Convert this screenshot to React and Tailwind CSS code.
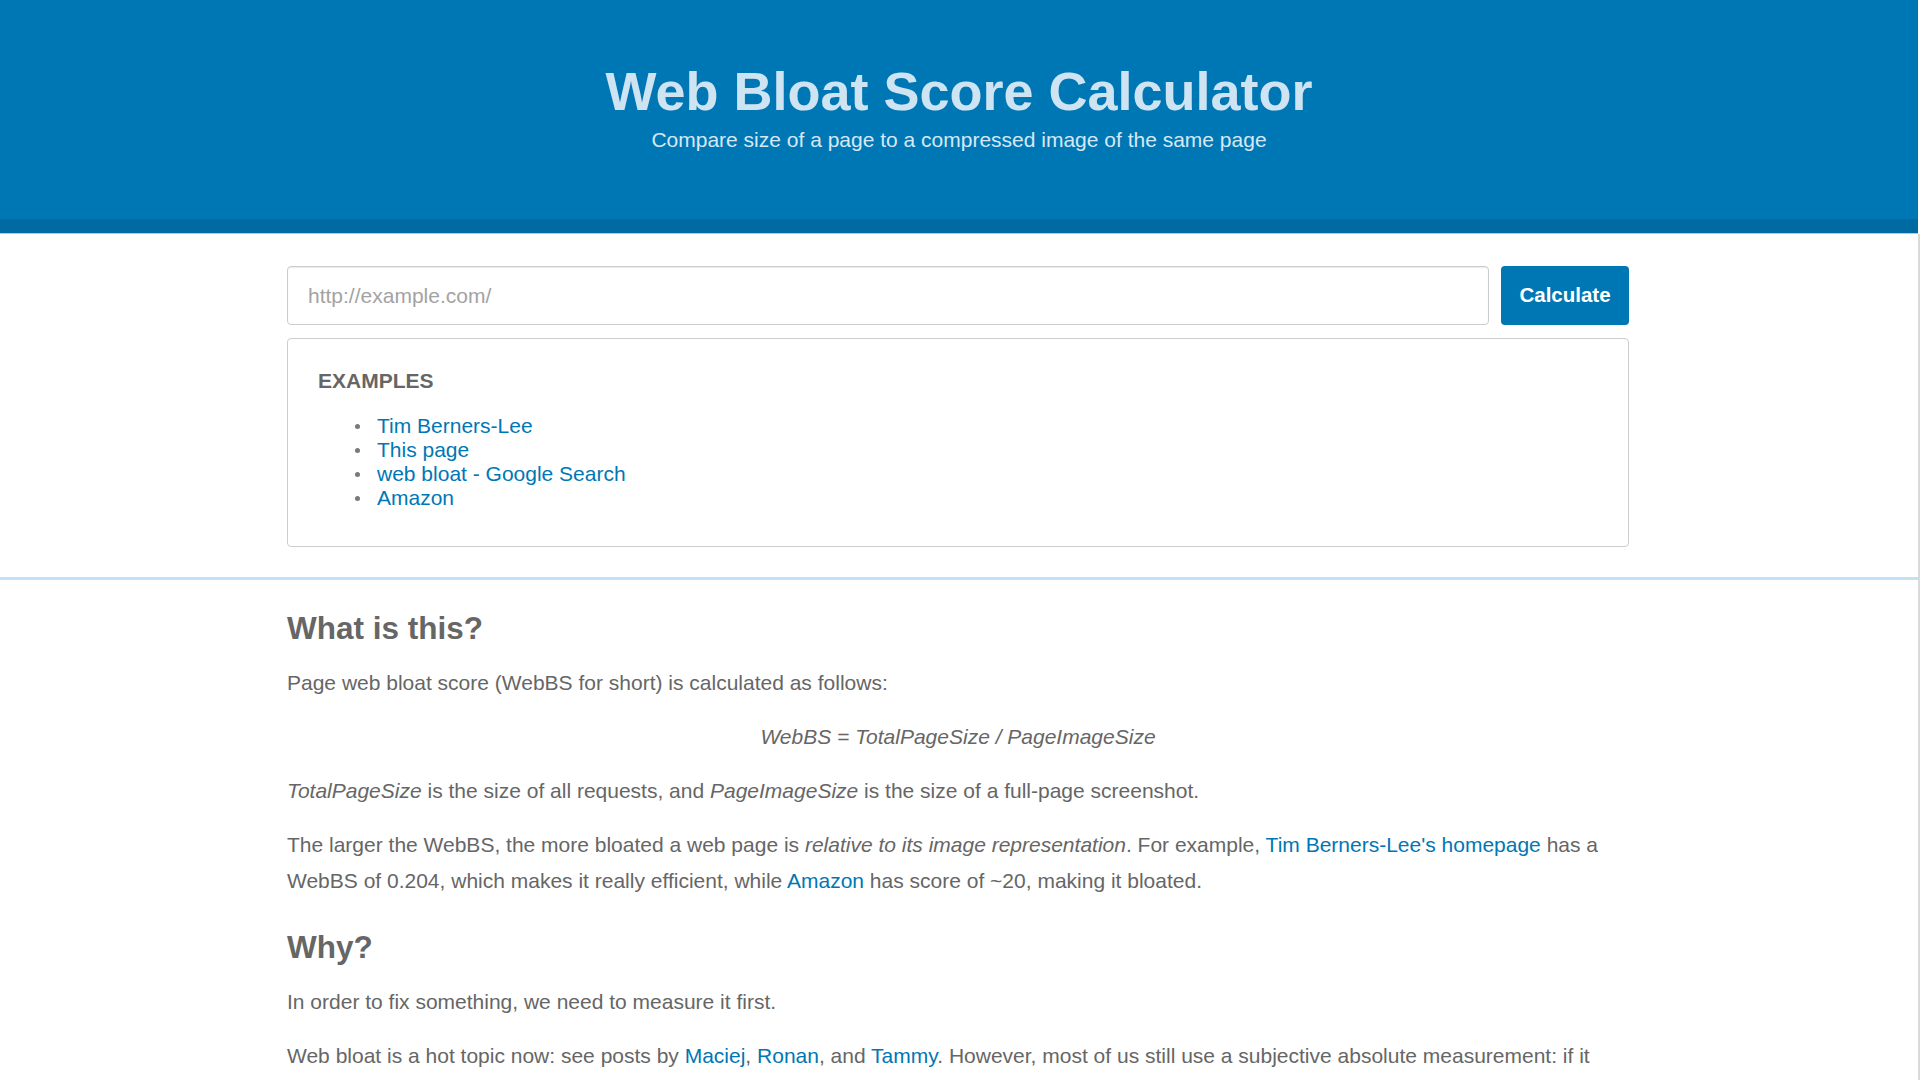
import React from 'react';

const examples = ['Tim Berners-Lee', 'This page', 'web bloat - Google Search', 'Amazon'];

function Link({ children }) {
  return (
    <a href="#" className="text-[#0077b5] no-underline">
      {children}
    </a>
  );
}

function Header() {
  return (
    <header>
      <div className="h-[219px] bg-[#0077b5] pt-[64px] text-center text-[#cfe4f2]">
        <h1 className="text-[54px] font-bold leading-[54px]">Web Bloat Score Calculator</h1>
        <p className="mt-[10px] text-[21px] leading-[24px] text-[#d6e8f4]">
          Compare size of a page to a compressed image of the same page
        </p>
      </div>
      <div className="h-[14px] bg-[#006aa1]" />
      <div className="h-px bg-[#a6cde8]" />
    </header>
  );
}

function CalcForm() {
  return (
    <section className="border-b-[3px] border-[#c2e1f5] pt-[32px] pb-[30px]">
      <div className="ml-[287px] w-[1342px]">
        <form className="flex gap-[12px]" onSubmit={(e) => e.preventDefault()}>
          <input
            type="text"
            placeholder="http://example.com/"
            className="h-[59px] flex-1 rounded-[4px] border border-[#cccccc] px-[20px] text-[21px] text-[#555] shadow-[inset_0_1px_1px_rgba(0,0,0,0.08)] outline-none placeholder:text-[#a3a3a3]"
          />
          <button
            type="submit"
            className="h-[59px] w-[128px] rounded-[4px] bg-[#0077b5] text-[20.5px] font-bold text-white"
          >
            Calculate
          </button>
        </form>

        <div className="mt-[13px] rounded-[4px] border border-[#cdcdcd] px-[30px] pt-[30px] pb-[36px]">
          <h3 className="text-[21px] font-bold leading-[24px] text-[#666]">EXAMPLES</h3>
          <ul className="mt-[21px] pl-[37px] text-[21px] leading-[24px]">
            {examples.map((ex) => (
              <li key={ex} className="flex items-center">
                <span className="mr-[17px] h-[5px] w-[5px] rounded-full bg-[#7a7a7a]" />
                <Link>{ex}</Link>
              </li>
            ))}
          </ul>
        </div>
      </div>
    </section>
  );
}

function About() {
  return (
    <section className="ml-[287px] w-[1342px] pt-[29px] text-[21px] leading-[36px] text-[#666]">
      <h2 className="mb-[18px] text-[31.5px] font-bold leading-[38px]">What is this?</h2>
      <p className="mb-[18px]">Page web bloat score (WebBS for short) is calculated as follows:</p>
      <p className="mb-[18px] text-center italic">WebBS = TotalPageSize / PageImageSize</p>
      <p className="mb-[18px]">
        <em>TotalPageSize</em> is the size of all requests, and <em>PageImageSize</em> is the size of a
        full-page screenshot.
      </p>
      <p className="mb-[18px]">
        The larger the WebBS, the more bloated a web page is <em>relative to its image representation</em>.
        For example, <Link>Tim Berners-Lee's homepage</Link> has a WebBS of 0.204, which makes it really
        efficient, while <Link>Amazon</Link> has score of ~20, making it bloated.
      </p>

      <h2 className="mt-[29px] mb-[18px] text-[31.5px] font-bold leading-[38px]">Why?</h2>
      <p className="mb-[18px]">In order to fix something, we need to measure it first.</p>
      <p className="mb-[18px]">
        Web bloat is a hot topic now: see posts by <Link>Maciej</Link>, <Link>Ronan</Link>, and{' '}
        <Link>Tammy</Link>. However, most of us still use a subjective absolute measurement: if it loads
        slowly, it's bloated.
      </p>
    </section>
  );
}

export default function App() {
  return (
    <div className="flex min-h-screen bg-white font-['Liberation_Sans',Arial,sans-serif]">
      <div className="w-[1918px] shrink-0">
        <Header />
        <CalcForm />
        <About />
      </div>
      <div className="flex w-[2px] flex-col">
        <div className="h-[234px] bg-white" />
        <div className="flex-1 bg-[#dadada]" />
      </div>
    </div>
  );
}
